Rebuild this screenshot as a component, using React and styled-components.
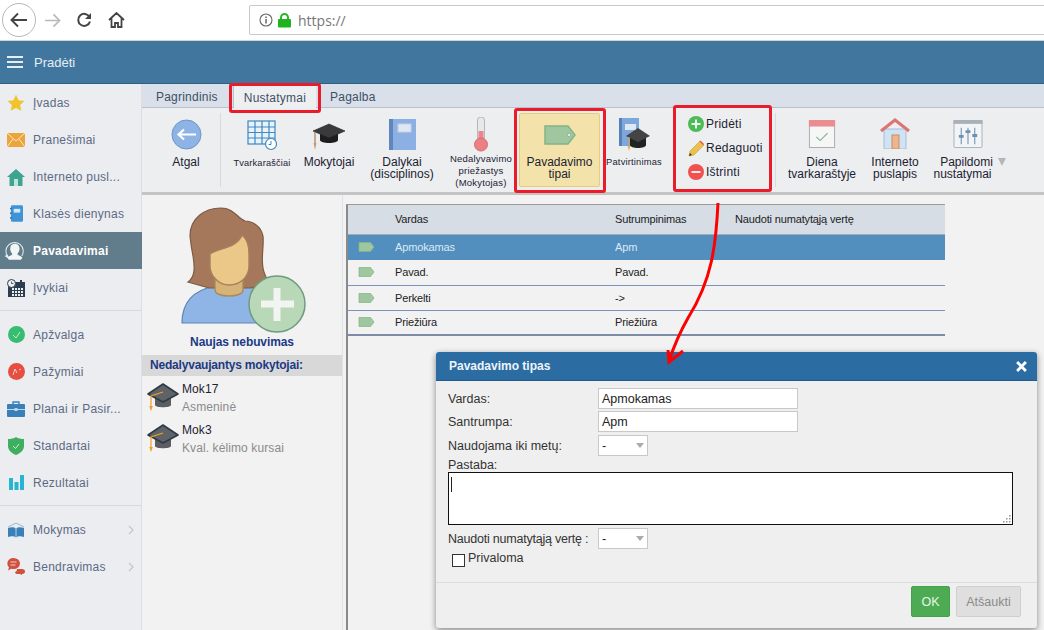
import React from "react";
import styled, { createGlobalStyle } from "styled-components";

const Global = createGlobalStyle`
  html, body { margin: 0; padding: 0; width: 1044px; height: 630px; overflow: hidden; background: #f2f2f2; }
  * { box-sizing: border-box; }
  body { font-family: "Liberation Sans", Arial, sans-serif; font-size: 12px; color: #222; }
`;

const Page = styled.div`position: relative; width: 1044px; height: 630px; overflow: hidden; display: flex; flex-direction: column;`;
const BrowserBar = styled.div`height: 41px; background: #fff; border-bottom: 1px solid #d4d4d4; display: flex; align-items: center; padding-left: 2px; flex: none;`;
const BackButton = styled.div`width: 34px; height: 34px; border: 1px solid #b8b8b8; border-radius: 50%; display: flex; align-items: center; justify-content: center;`;
const NavIcon = styled.div`width: 32px; display: flex; justify-content: center;`;
const UrlBox = styled.div`margin-left: 117px; flex: 1; height: 30px; margin-right: -6px; border: 1px solid #c9c9c9; border-radius: 2px; display: flex; align-items: center; padding-left: 9px; gap: 5px; color: #777; font-family: "Open Sans", sans-serif; font-size: 14px;`;
const UrlText = styled.span`margin-left: 2px;`;
const Header = styled.div`height: 43px; background: #41779f; border-bottom: 1px solid #2f5f83; display: flex; align-items: center; padding-left: 7px; gap: 11px; color: #e6eef4; font-size: 13px; flex: none;`;
const Body = styled.div`flex: 1; min-height: 0; display: grid; grid-template-columns: 142px 1fr;`;

const Sidebar = styled.nav`background: #ebedf0; border-right: 1px solid #dcdee1; padding-top: 0;`;
const NavRow = styled.div`height: 37px; display: flex; align-items: center; padding-left: 6px; gap: 7px; color: ${p => p.$active ? "#fff" : "#5d6a84"}; background: ${p => p.$active ? "#617d8b" : "transparent"}; font-weight: ${p => p.$active ? 700 : 400}; letter-spacing: .25px; margin-right: ${p => p.$active ? "-1px" : "0"};`;
const NavIconBox = styled.span`width: 20px; height: 20px; display: flex; align-items: center; justify-content: center; flex: none;`;
const Chevron = styled.span`margin-left: auto; margin-right: 7px; display: flex;`;
const NavDivider = styled.div`height: 1px; background: #d8d9db; margin: 4px 0 5px;`;

const Main = styled.div`display: flex; flex-direction: column; min-width: 0;`;
const Tabs = styled.div`height: 24px; background: #d9e0ea; border-bottom: 1px solid #b9c2cc; display: flex; padding: 0 0 0 4px; align-items: flex-end; flex: none;`;
const Tab = styled.div`height: ${p => p.$active ? "23px" : "22px"}; padding: ${p => p.$active ? "3px 10px 0" : "2px 10px 0"}; display: flex; align-items: center; color: #3f4f66; letter-spacing: .22px; background: ${p => p.$active ? "#edeff1" : "transparent"}; border-left: ${p => p.$active ? "1px solid #b9c2cc" : "none"}; margin: ${p => p.$active ? "0 4px -1px 5px" : "0"};`;
const Ribbon = styled.div`height: 87px; background: #eceef0; border-bottom: 3px solid #c4c4c4; display: flex; padding-left: 10px; flex: none;`;
const RibbonButton = styled.div`width: ${p => p.$w}px; flex: none; display: flex; flex-direction: column; align-items: center; padding-top: ${p => p.$pt ?? 8}px; text-align: center; line-height: 12px; color: #1d2230; font-size: ${p => p.$size ?? 12}px; letter-spacing: ${p => p.$size ? ".2px" : "0"};`;
const HighlightButton = styled(RibbonButton)`height: 74px; margin: 5px 0 0 6px; padding-top: 6px; background: #f3e3ab; border: 1px solid #e6cd76; border-radius: 2px;`;
const RibbonIcon = styled.div`height: ${p => p.$h ?? 37}px; display: flex; align-items: center; justify-content: center; margin-bottom: ${p => p.$mb ?? 3}px; flex: none;`;
const ShiftedLine = styled.span`margin: 0 ${p => p.$r ?? 0}px 0 ${p => p.$l ?? 0}px; white-space: nowrap;`;
const Separator = styled.div`width: 1px; height: 74px; margin-top: 5px; background: #d8dadc; flex: none;`;
const ActionGroup = styled.div`width: 98px; margin-left: 9px; padding: 4px 0 0 11px; flex: none; display: flex; flex-direction: column;`;
const ActionRow = styled.div`height: 24px; display: flex; align-items: center; gap: 2px; color: #1d2230; letter-spacing: .22px;`;
const Triangle = styled.span`display: inline-block; width: 0; height: 0; border-left: 4.5px solid transparent; border-right: 4.5px solid transparent; border-top: 8px solid #b4b6b8; margin-left: 5px;`;

const Content = styled.div`flex: 1; min-height: 0; display: flex; background: #f2f2f2;`;
const LeftPanel = styled.aside`width: 201px; flex: none; border-right: 1px solid #dde3e8; display: flex; flex-direction: column; align-items: stretch; padding-top: 11px;`;
const Avatar = styled.div`height: 124px; padding-left: 37px; flex: none;`;
const PanelTitle = styled.div`height: 25px; text-align: center; font-weight: 700; color: #1c3a84; line-height: 20px; padding-top: 2px; letter-spacing: -.1px;`;
const PanelBand = styled.div`height: 21px; background: #d8d8d8; color: #1c3a84; font-weight: 700; line-height: 21px; padding-left: 8px; letter-spacing: -.2px;`;
const TeacherRow = styled.div`height: 41px; display: flex; padding-left: 4px; gap: 2px; margin-top: ${p => p.$mt ?? 0}px;`;
const TeacherText = styled.div`display: flex; flex-direction: column; gap: 4px; line-height: 14px; padding-top: 1px; letter-spacing: .1px;`;
const TeacherName = styled.span`color: #1d2230;`;
const TeacherSub = styled.span`color: #8b8b8b;`;
const TableWrap = styled.div`width: 599px; margin: 9px 0 0 3px; border-left: 2px solid #8a8a8a; border-top: 1px solid #9a9a9a; align-self: stretch;`;
const Table = styled.table`width: 597px; border-collapse: collapse; table-layout: fixed; font-size: 11px; letter-spacing: -.15px;`;
const HeadRow = styled.tr`height: 29px; background: #d6dde5;`;
const Row = styled.tr`height: ${p => p.$sel ? 26 : 25}px; background: ${p => p.$sel ? "#528fbf" : "#f2f2f2"}; color: ${p => p.$sel ? "#dce9f3" : "#222"}; border-bottom: ${p => p.$last ? "2px solid #7d8ba6" : p.$sel ? "none" : "1px solid #7a94bf"};`;
const Cell = styled.td`padding: 0; vertical-align: middle; font-weight: 400;`;
const HeadCell = styled.th`padding: 0; vertical-align: middle; text-align: left; font-weight: 400; border-bottom: 1px solid #a4aab2;`;
const TagCell = styled(Cell)`padding-left: 10px; line-height: 0;`;

const Modal = styled.section`position: absolute; left: 436px; top: 352px; width: 601px; height: 276px; background: #efefef; border-radius: 3px; box-shadow: 0 2px 6px rgba(0,0,0,.45); display: flex; flex-direction: column; font-size: 12.5px; color: #333;`;
const ModalHead = styled.div`height: 29px; flex: none; background: #2b6ca3; border-bottom: 1px solid #24598a; border-radius: 3px 3px 0 0; color: #eef4f9; font-weight: 700; font-size: 12px; display: flex; align-items: center; justify-content: space-between; padding: 0 10px 0 13px;`;
const ModalBody = styled.div`flex: 1; padding: 7px 24px 0 12px; display: flex; flex-direction: column;`;
const FormRow = styled.div`display: flex; align-items: center; height: 21px; margin-bottom: ${p => p.$mb ?? 2}px;`;
const FormLabel = styled.label`width: 150px; flex: none; letter-spacing: ${p => p.$tight ? "-.22px" : "0"};`;
const TextInput = styled.div`width: 200px; height: 21px; background: #fff; border: 1px solid #c8c8c8; line-height: 20px; padding-left: 3px; color: #222;`;
const SelectBox = styled.div`width: 50px; height: 21px; background: #fff; border: 1px solid #c8c8c8; display: flex; align-items: center; justify-content: space-between; padding: 0 3px; color: #222;`;
const SelectArrow = styled.span`width: 0; height: 0; border-left: 4px solid transparent; border-right: 4px solid transparent; border-top: 5px solid #aaa;`;
const NoteLabel = styled.div`height: 16px; padding-top: 2px; line-height: 15px;`;
const TextArea = styled.div`width: 565px; height: 53px; flex: none; background: #fff; border: 1px solid #111; position: relative; margin-bottom: 3px;`;
const Caret = styled.span`position: absolute; left: 2px; top: 4px; width: 1px; height: 15px; background: #222;`;
const Grip = styled.svg`position: absolute; right: 1px; bottom: 1px;`;
const CheckRow = styled.div`display: flex; padding-left: 4px; gap: 3px; margin-top: 2px;`;
const CheckBox = styled.span`width: 13px; height: 13px; margin-top: 3px; background: #fff; border: 1px solid #333;`;
const ModalFoot = styled.div`height: 46px; flex: none; border-top: 1px solid #dcdcdc; display: flex; justify-content: flex-end; gap: 6px; padding: 3px 16px 0 0;`;
const Btn = styled.button`height: 31px; width: ${p => p.$w}px; font: inherit; border-radius: 2px; padding: 0; border: 1px solid ${p => p.$ok ? "#46a049" : "#cfcfcf"}; background: ${p => p.$ok ? "#4dab53" : "#dfdfdf"}; color: ${p => p.$ok ? "#e8f6e8" : "#8a8a8a"};`;

const RedBox = styled.div`position: absolute; left: ${p => p.$x}px; top: ${p => p.$y}px; width: ${p => p.$w}px; height: ${p => p.$h}px; border: 3px solid #ea1c2c; border-radius: 3px; pointer-events: none;`;
const ArrowLayer = styled.svg`position: absolute; left: 0; top: 0; pointer-events: none;`;

const Tag = ({ w = 17, h = 10 }) => (
  <svg width={w} height={h} viewBox="0 0 32 20"><path d="M1 1h23l7 9-7 9H1z" fill="#9fc79f" stroke="#86b386" strokeWidth="1.5" /><circle cx="25" cy="10" r="1.6" fill="#e8f0e8" stroke="#7aa67a" strokeWidth=".6"/></svg>
);

const Cap = ({ w = 34, h = 32 }) => (
  <svg width={w} height={h} viewBox="0 0 34 32">
    <path d="M9 15v9c0 3 16 3 16 0v-9z" fill="#5b5d60" />
    <path d="M17 3 32 13 17 21 2 13z" fill="#5f6266" stroke="#2e3b46" strokeWidth="1.6" strokeLinejoin="round" />
    <path d="M17 11 5 15v10" fill="none" stroke="#eda02b" strokeWidth="1.2" />
    <path d="M3.2 25h3.6L5 30z" fill="#eda02b" />
  </svg>
);

const BlackCap = () => (
  <svg width="34" height="34" viewBox="0 0 34 34">
    <path d="M8 16v6c0 4 18 4 18 0v-6z" fill="#1d1d1f" />
    <path d="M17 6 33 13 17 20 1 13z" fill="#3a3a3c" stroke="#222" strokeWidth=".6"/>
    <path d="M3 14v11" stroke="#a87d5b" strokeWidth="1.2" />
    <path d="M1.5 25h3L3 32z" fill="#d19a6b" />
  </svg>
);

const items1 = [
  ["Įvadas", <svg width="18" height="18" viewBox="0 0 24 24"><path d="m12 1 3.4 7.2 7.8 1-5.7 5.4 1.5 7.8-7-3.8-7 3.8 1.5-7.8L.8 9.2l7.8-1z" fill="#eec52e" /></svg>],
  ["Pranešimai", <svg width="18" height="14" viewBox="0 0 18 14"><rect width="18" height="14" fill="#eda43b" /><path d="M0 0l9 8 9-8M0 14l6-8M18 14l-6-8" fill="none" stroke="#fbe7c4" strokeWidth="1" /></svg>],
  ["Interneto pusl...", <svg width="18" height="18" viewBox="0 0 18 18"><path d="M9 1 0 9h2.5v9h13V9H18z" fill="#3fa392" /><rect x="7" y="11" width="4" height="7" fill="#bfe3dc" /></svg>],
  ["Klasės dienynas", <svg width="13" height="17" viewBox="0 0 14 18"><rect x="1" width="13" height="18" rx="1.500" fill="#3f94d8" /><rect x="4" y="4" width="7" height="4" fill="#d4e8f7" /><rect x="0" y="3" width="2" height="1.500" fill="#2772ad" /><rect x="0" y="8" width="2" height="1.500" fill="#2772ad" /><rect x="0" y="13" width="2" height="1.500" fill="#2772ad" /></svg>],
];
const UserRing = (
  <svg width="32" height="32" viewBox="0 0 32 32" style={{ marginLeft: -3 }}>
    <path d="M7 24A12 12 0 1 1 26 23" fill="none" stroke="#e6edf0" strokeWidth="1.4" />
    <path d="M2 23l5 3 0-5z" fill="#e6edf0" />
    <path d="M16 6c-4 0-6 3-6 7s2 6 3 7c0 2-5 3-7 5l2 3h17l2-3c-2-2-7-3-7-5 1-1 3-3 3-7s-2-7-7-7z" fill="#f3f6f7" />
  </svg>
);
const Events = (
  <svg width="18" height="18" viewBox="0 0 18 18"><rect x="1" y="3" width="17" height="15" fill="#2c3e50" /><rect x="13" y="1" width="2" height="3" fill="#2c3e50" /><g fill="#ecf0f1">{[5,8,11,14].map(x => [9,12,15].map(y => <rect key={x+"-"+y} x={x} y={y} width="2" height="2" />))}</g><circle cx="4.5" cy="4.5" r="4" fill="#ecf0f1" stroke="#2c3e50" /><path d="M4.500 2.500v2h2" fill="none" stroke="#2c3e50" strokeWidth=".8" /></svg>
);
const items2 = [
  ["Apžvalga", <svg width="17" height="17" viewBox="0 0 17 17"><circle cx="8.5" cy="8.5" r="8.5" fill="#37bd70" /><path d="m5 9 3 3 4-6" fill="none" stroke="#bfeed2" strokeWidth="1" /></svg>],
  ["Pažymiai", <svg width="17" height="17" viewBox="0 0 17 17"><circle cx="8.5" cy="8.5" r="8.5" fill="#e54e41" /><path d="m5 12 2-6 2 4M11 7l2-1" fill="none" stroke="#f7cfcb" strokeWidth="1" /></svg>],
  ["Planai ir Pasir...", <svg width="18" height="16" viewBox="0 0 18 16"><path d="M6 3V1h6v2" fill="none" stroke="#3a80b8" strokeWidth="1.4"/><rect y="3" width="18" height="13" rx="1" fill="#3a80b8" /><rect y="8" width="18" height="1" fill="#bcd8ec" /><rect x="7.5" y="7" width="3" height="3" fill="#bcd8ec" /></svg>],
  ["Standartai", <svg width="16" height="18" viewBox="0 0 16 18"><path d="M8 0c2 1.500 5 2 8 2v7c0 4-3 7-8 9-5-2-8-5-8-9V2c3 0 6-.5 8-2z" fill="#3fae61" /><path d="m5 9 2.500 2.500L11 7" fill="none" stroke="#c9efd4" strokeWidth="1" /></svg>],
  ["Rezultatai", <svg width="15" height="15" viewBox="0 0 15 15"><g fill="#27b5d2"><rect y="3" width="4" height="12" /><rect x="5.500" y="7" width="4" height="8" /><rect x="11" width="4" height="15" /></g></svg>],
];
const items3 = [
  ["Mokymas", <svg width="18" height="16" viewBox="0 0 18 16"><path d="M1 6c3-1 6-1 8 .5 2-1.500 5-1.500 8-.5v9c-3-1-6-1-8 .5-2-1.500-5-1.500-8-.5z" fill="#3a80b8" /><path d="M1 5 9 1l8 4" stroke="#8fb9d8" fill="none" /><path d="M9 6v9" stroke="#d7e6f1" strokeWidth=".8" /></svg>],
  ["Bendravimas", <svg width="18" height="17" viewBox="0 0 18 17"><path d="M6.500 0a6.500 5.500 0 0 1 0 11c-.8 0-1.500-.1-2.200-.3L1 12.500l1-3.200A5.500 5.500 0 0 1 6.500 0z" fill="#d14f3f" /><path d="M3.500 4h6M3.500 7h5" stroke="#f4cfc9" /><path d="M10 11h5c2 0 3 1 3 2.500s-1 2.500-3 2.500v1l-2-1h-3c-1 0-2-1-2-2 1 0 2-1 2-3z" fill="#d14f3f" /></svg>],
];

const Chev = () => (
  <Chevron><svg width="6" height="10" viewBox="0 0 6 10"><path d="m1 1 4 4-4 4" fill="none" stroke="#c3c6ca" strokeWidth="1.2" /></svg></Chevron>
);

const rows = [["Apmokamas", "Apm"], ["Pavad.", "Pavad."], ["Perkelti", "->"], ["Priežiūra", "Priežiūra"]];

export default function App() {
  return (
    <Page>
      <Global />
      <BrowserBar>
        <BackButton>
          <svg width="18" height="16" viewBox="0 0 18 16"><path d="M17 8H2M8 1.500 1.500 8 8 14.500" fill="none" stroke="#444" strokeWidth="1.900" /></svg>
        </BackButton>
        <NavIcon><svg width="17" height="15" viewBox="0 0 18 16"><path d="M1 8h15M10 1.500 16.500 8 10 14.500" fill="none" stroke="#b9b9b9" strokeWidth="1.800" /></svg></NavIcon>
        <NavIcon><svg width="16" height="16" viewBox="0 0 16 16"><path d="M13.500 5A6 6 0 1 0 14 9.500" fill="none" stroke="#444" strokeWidth="2" /><path d="M15 1v6H9z" fill="#444" /></svg></NavIcon>
        <NavIcon><svg width="17" height="16" viewBox="0 0 17 16"><path d="M1 8 8.500 1 16 8M3.500 6.500V15h3.500v-4h3v4h3.500V6.500" fill="none" stroke="#444" strokeWidth="1.800" /></svg></NavIcon>
        <UrlBox>
          <svg width="14" height="14" viewBox="0 0 14 14"><circle cx="7" cy="7" r="6" fill="none" stroke="#666" strokeWidth="1.100" /><rect x="6.300" y="6" width="1.500" height="4.500" fill="#666" /><rect x="6.300" y="3.500" width="1.500" height="1.500" fill="#666" /></svg>
          <svg width="13" height="15" viewBox="0 0 13 15"><path d="M3 7V4.500a3.500 3.500 0 0 1 7 0V7" fill="none" stroke="#2cb52c" strokeWidth="2" /><rect y="6" width="13" height="8.500" rx="1" fill="#1fb31f" /></svg>
          <UrlText>https://</UrlText>
        </UrlBox>
      </BrowserBar>
      <Header>
        <svg width="16" height="12" viewBox="0 0 16 12"><path d="M0 1h16M0 6h16M0 11h16" stroke="#e6eef4" strokeWidth="2" /></svg>
        Pradėti
      </Header>
      <Body>
        <Sidebar>
          {items1.map(([t, i]) => <NavRow key={t}><NavIconBox>{i}</NavIconBox>{t}</NavRow>)}
          <NavRow $active><NavIconBox>{UserRing}</NavIconBox>Pavadavimai</NavRow>
          <NavRow><NavIconBox>{Events}</NavIconBox>Įvykiai</NavRow>
          <NavDivider />
          {items2.map(([t, i]) => <NavRow key={t}><NavIconBox>{i}</NavIconBox>{t}</NavRow>)}
          <NavDivider />
          {items3.map(([t, i]) => <NavRow key={t}><NavIconBox>{i}</NavIconBox>{t}<Chev /></NavRow>)}
        </Sidebar>
        <Main>
          <Tabs>
            <Tab>Pagrindinis</Tab>
            <Tab $active>Nustatymai</Tab>
            <Tab>Pagalba</Tab>
          </Tabs>
          <Ribbon>
            <RibbonButton $w={68}>
              <RibbonIcon $mb={3}>
                <svg width="31" height="31" viewBox="0 0 31 31"><circle cx="15.500" cy="15.500" r="14.500" fill="#8eb4e6" stroke="#6f95c9" /><path d="M25 15.500H8M13 10.500l-5.500 5 5.500 5" fill="none" stroke="#fff" strokeWidth="2.200" /></svg>
              </RibbonIcon>
              Atgal
            </RibbonButton>
            <Separator />
            <RibbonButton $w={82} $size={9.2}>
              <RibbonIcon $mb={4}>
                <svg width="32" height="32" viewBox="0 0 32 32"><g fill="none" stroke="#3e88c4" strokeWidth="1.200"><rect x="2" y="2" width="27" height="23" fill="#eaf2f9" /><path d="M2 8h27M2 13.500h27M2 19h27M9 2v23M16 2v23M23 2v23" /></g><circle cx="25" cy="25" r="5.500" fill="#fff" stroke="#3e88c4" strokeWidth="1.200" /><path d="M25 22v3.500h-2.500" fill="none" stroke="#3e88c4" /></svg>
              </RibbonIcon>
              Tvarkaraščiai
            </RibbonButton>
            <RibbonButton $w={52}>
              <RibbonIcon $mb={3}><BlackCap /></RibbonIcon>
              Mokytojai
            </RibbonButton>
            <RibbonButton $w={94}>
              <RibbonIcon $mb={3}>
                <svg width="27" height="31" viewBox="0 0 27 31"><rect width="27" height="31" fill="#8cb0e3" /><rect width="4" height="31" fill="#5f86bd" /><rect x="9" y="5" width="13" height="8" fill="#dfe7f3" stroke="#c5d0e0" /></svg>
              </RibbonIcon>
              Dalykai<br />(disciplinos)
            </RibbonButton>
            <RibbonButton $w={64} $size={9.5} $pt={8}>
              <RibbonIcon $h={36} $mb={1}>
                <svg width="14" height="35" viewBox="0 0 14 35"><path d="M3.500 3a3.500 3 0 0 1 7 0v19H3.500z" fill="#e8e8e8" stroke="#b4b8bd" /><rect x="4.500" y="14" width="5" height="10" fill="#e9868a" /><circle cx="7" cy="27.500" r="6.500" fill="#ea7f84" stroke="#d56d72" /></svg>
              </RibbonIcon>
              Nedalyvavimo<br />priežastys<br />(Mokytojas)
            </RibbonButton>
            <HighlightButton $w={81}>
              <RibbonIcon $h={29} $mb={7}><Tag w={32} h={20} /></RibbonIcon>
              Pavadavimo<br />tipai
            </HighlightButton>
            <RibbonButton $w={68} $size={9.3}>
              <RibbonIcon $h={37} $mb={3}>
                <svg width="34" height="34" viewBox="0 0 34 34"><rect x="2" width="20" height="28" fill="#7ea7dc" /><rect x="2" width="3" height="28" fill="#5680b8" /><rect x="8" y="6" width="11" height="6" fill="#dfe7f3" /><path d="M13 20v7c0 4 16 4 16 0v-7z" fill="#222" /><path d="M21 10l12 8-12 6-12-6z" fill="#444" /><path d="M12 19v9" stroke="#d6a24a" /><path d="M10.500 28h3l-1.500 5z" fill="#e3b45c" /></svg>
              </RibbonIcon>
              Patvirtinimas
            </RibbonButton>
            <ActionGroup>
              <ActionRow>
                <svg width="16" height="16" viewBox="0 0 16 16"><circle cx="8" cy="8" r="8" fill="#4cbb57" /><path d="M8 3.500v9M3.500 8h9" stroke="#e9f8ea" strokeWidth="2" /></svg>
                Pridėti
              </ActionRow>
              <ActionRow>
                <svg width="16" height="17" viewBox="0 0 16 17"><path d="M1 16l1-5L12 1l4 4L6 15z" fill="#ecc04e" stroke="#c79d32" strokeWidth=".6" /><path d="m11.500 1.500 1-1 3.500 3.500-1 1z" fill="#e2584f" /><path d="M1 16l1-3 2 2z" fill="#333" /></svg>
                Redaguoti
              </ActionRow>
              <ActionRow>
                <svg width="16" height="16" viewBox="0 0 16 16"><circle cx="8" cy="8" r="8" fill="#f0504f" /><path d="M3.500 8h9" stroke="#fde8e8" strokeWidth="2" /></svg>
                Ištrinti
              </ActionRow>
            </ActionGroup>
            <Separator />
            <RibbonButton $w={92} $pt={12}>
              <RibbonIcon $h={28} $mb={8}>
                <svg width="28" height="28" viewBox="0 0 28 30"><rect x=".5" y=".5" width="27" height="29" fill="#f6f6f6" stroke="#a9a9a9" /><rect width="28" height="7" fill="#e98d91" /><path d="m8 18 4 4 8-8" fill="none" stroke="#7fb08f" strokeWidth="1.200" /></svg>
              </RibbonIcon>
              Diena<br />tvarkaraštyje
            </RibbonButton>
            <RibbonButton $w={54} $pt={10}>
              <RibbonIcon $h={31} $mb={7}>
                <svg width="30" height="31" viewBox="0 0 30 31"><rect x="4" y="11" width="22" height="20" fill="#cfe3f5" stroke="#a6bfd6" /><path d="M1 13 15 2l14 11" fill="none" stroke="#de7373" strokeWidth="3" /><rect x="12" y="17" width="7" height="14" fill="#eeb58c" stroke="#c98d63" /></svg>
              </RibbonIcon>
              Interneto<br />puslapis
            </RibbonButton>
            <RibbonButton $w={92} $pt={12}>
              <RibbonIcon $h={28} $mb={8}>
                <svg width="30" height="28" viewBox="0 0 30 29"><rect x=".5" y=".5" width="29" height="28" rx="1" fill="#f2f4f6" stroke="#a8b0b8" /><rect width="30" height="4" fill="#a8b0b8" /><g stroke="#6d91b4" strokeWidth="1.100"><path d="M8 8v17M15 8v17M22 8v17" /><path d="M5.500 17h5M12.500 12h5M19.500 16h5" strokeWidth="3" /></g></svg>
              </RibbonIcon>
              <ShiftedLine $l={10}>Papildomi<Triangle /></ShiftedLine>
              <ShiftedLine $r={11}>nustatymai</ShiftedLine>
            </RibbonButton>
          </Ribbon>
          <Content>
            <LeftPanel>
              <Avatar>
                <svg width="130" height="128" viewBox="0 0 130 128">
                  <path d="M3 117C3 95 15 84 36 80h28c25 3 49 15 50 37z" fill="#8fb4e6" stroke="#5c85b5" strokeWidth="1.200" />
                  <path d="M9 76c7-5 7-14 5-26-2-10-3-20-3-20C11 12 26 2 42 2c13 0 16 10 24 13 7 0 16 5 18 15 1 10-2 22 0 32 1 6 4 11 6 14l-18 6H30z" fill="#a5785c" stroke="#7d5a44" strokeWidth="1.200" />
                  <path d="M36 68v16c0 8 28 8 28 0V68z" fill="#d6b477" stroke="#a88a5b" strokeWidth="1.400" />
                  <path d="M31 48c9-6 27-6 32-19 5 4 7 11 7 19v12c0 12-10 19-20 19S31 70 31 60z" fill="#ecc888" stroke="#a6805f" strokeWidth="1.400" />
                  <circle cx="98" cy="98" r="28" fill="#b8d8b8" stroke="#6e9c7c" strokeWidth="1.500" />
                  <path d="M98 82v33M82 98h33" stroke="#f2f4f2" strokeWidth="7" />
                </svg>
              </Avatar>
              <PanelTitle>Naujas nebuvimas</PanelTitle>
              <PanelBand>Nedalyvaujantys mokytojai:</PanelBand>
              <TeacherRow $mt={5}>
                <Cap />
                <TeacherText><TeacherName>Mok17</TeacherName><TeacherSub>Asmeninė</TeacherSub></TeacherText>
              </TeacherRow>
              <TeacherRow>
                <Cap />
                <TeacherText><TeacherName>Mok3</TeacherName><TeacherSub>Kval. kėlimo kursai</TeacherSub></TeacherText>
              </TeacherRow>
            </LeftPanel>
            <TableWrap>
              <Table>
                <colgroup><col style={{ width: 47 }} /><col style={{ width: 220 }} /><col style={{ width: 120 }} /><col /></colgroup>
                <thead>
                  <HeadRow><HeadCell /><HeadCell>Vardas</HeadCell><HeadCell>Sutrumpinimas</HeadCell><HeadCell>Naudoti numatytąją vertę</HeadCell></HeadRow>
                </thead>
                <tbody>
                  {rows.map(([a, b], i) => (
                    <Row key={a} $sel={i === 0} $last={i === 3}>
                      <TagCell><Tag /></TagCell><Cell>{a}</Cell><Cell>{b}</Cell><Cell />
                    </Row>
                  ))}
                </tbody>
              </Table>
            </TableWrap>
          </Content>
        </Main>
      </Body>

      <Modal>
        <ModalHead>
          Pavadavimo tipas
          <svg width="11" height="11" viewBox="0 0 10 10"><path d="M1 1l8 8M9 1 1 9" stroke="#fff" strokeWidth="2.600" /></svg>
        </ModalHead>
        <ModalBody>
          <FormRow><FormLabel>Vardas:</FormLabel><TextInput>Apmokamas</TextInput></FormRow>
          <FormRow $mb={3}><FormLabel>Santrumpa:</FormLabel><TextInput>Apm</TextInput></FormRow>
          <FormRow $mb={0}><FormLabel>Naudojama iki metų:</FormLabel><SelectBox>-<SelectArrow /></SelectBox></FormRow>
          <NoteLabel>Pastaba:</NoteLabel>
          <TextArea>
            <Caret />
            <Grip width="9" height="9" viewBox="0 0 9 9"><g fill="#999"><rect x="7" y="1" width="1.500" height="1.500" /><rect x="4" y="4" width="1.500" height="1.500" /><rect x="7" y="4" width="1.500" height="1.500" /><rect x="1" y="7" width="1.500" height="1.500" /><rect x="4" y="7" width="1.500" height="1.500" /><rect x="7" y="7" width="1.500" height="1.500" /></g></Grip>
          </TextArea>
          <FormRow $mb={0}><FormLabel $tight>Naudoti numatytąją vertę :</FormLabel><SelectBox>-<SelectArrow /></SelectBox></FormRow>
          <CheckRow><CheckBox />Privaloma</CheckRow>
        </ModalBody>
        <ModalFoot>
          <Btn $ok $w={39}>OK</Btn>
          <Btn $w={65}>Atšaukti</Btn>
        </ModalFoot>
      </Modal>

      <RedBox $x={229} $y={83} $w={92} $h={30} />
      <RedBox $x={514} $y={108} $w={92} $h={85} />
      <RedBox $x={673} $y={105} $w={99} $h={87} />
      <ArrowLayer width="1044" height="630" viewBox="0 0 1044 630">
        <path d="M718 203C716 245 712 280 688 318 680 332 674 346 669 361" fill="none" stroke="#f00" strokeWidth="3" />
        <path d="M668 350 669 362 683 351" fill="none" stroke="#f00" strokeWidth="3" />
      </ArrowLayer>
    </Page>
  );
}
